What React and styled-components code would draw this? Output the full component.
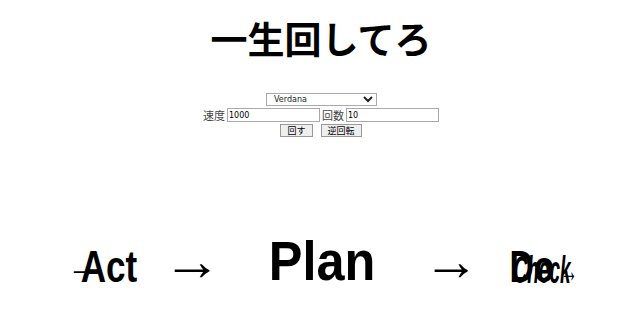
import React, { useState } from 'react';
import styled, { createGlobalStyle } from 'styled-components';

const GlobalStyle = createGlobalStyle`
  body {
    margin: 8px;
    background: #ffffff;
    font-family: "Liberation Sans", "Noto Sans CJK JP", sans-serif;
    color: #000000;
    overflow: hidden;
  }
`

const Page = styled.div`
  display: flex;
  flex-direction: column;
  align-items: center;
  padding-left: 12px;
`

const Title = styled.h1`
  margin: 6px 0 0 0;
  font-family: "Noto Sans CJK JP", sans-serif;
  font-size: 37px;
  font-weight: bold;
  line-height: 48px;
`

const Controls = styled.div`
  margin-top: 31px;
  display: flex;
  flex-direction: column;
  align-items: center;
  gap: 1px;
  font-family: "Noto Sans CJK JP", sans-serif;
  font-size: 10px;
  color: #333333;
`

const Row = styled.div`
  display: flex;
  align-items: center;
  gap: 2px;
`

const FontSelect = styled.select`
  width: 111px;
  height: 13px;
  margin-left: 1px;
  padding: 0 3px;
  font-family: "DejaVu Sans", sans-serif;
  font-size: 8px;
  border: 1px solid #a9a9a9;
  background: #ffffff;
  color: #222222;
`

const Field = styled.input`
  width: 93px;
  height: 14px;
  box-sizing: border-box;
  padding: 0 1px;
  font-family: "DejaVu Sans", sans-serif;
  font-size: 8px;
  border: 1px solid #a9a9a9;
  color: #000000;
`

const Label = styled.span`
  font-size: 11px;
  color: #444444;
`

const Button = styled.button`
  height: 13px;
  padding: 0 6px;
  margin: 0 3px;
  font-family: "Noto Sans CJK JP", sans-serif;
  font-size: 9px;
  line-height: 11px;
  border: 1px solid #999999;
  background: #efefef;
  color: #000000;
`

const Stage = styled.div`
  position: relative;
  align-self: stretch;
  margin-left: -12px;
  height: 70px;
  margin-top: 94px;
`

const Item = styled.span`
  position: absolute;
  bottom: ${p => p.$lift}px;
  white-space: nowrap;
  font-family: ${p => p.$arrow ? '"Liberation Serif", serif' : '"Liberation Sans", sans-serif'};
  font-weight: ${p => p.$arrow ? 'normal' : 'bold'};
  font-style: ${p => p.$italic ? 'italic' : 'normal'};
  font-size: ${p => p.$size}px;
  line-height: 1;
  transform: translateX(-50%) scaleX(${p => p.$sx});
`

// carousel items: x center on page, font size, horizontal squash, lift from base
const ring = [
  { text: '→', x: 81, size: 40, sx: 0.7, lift: 15, arrow: true },
  { text: 'Act', x: 108, size: 45, sx: 0.78, lift: 12 },
  { text: '→', x: 191, size: 56, sx: 1.05, lift: 12, arrow: true },
  { text: 'Plan', x: 321, size: 56, sx: 0.9, lift: 12 },
  { text: '→', x: 450, size: 56, sx: 1.0, lift: 12, arrow: true },
  { text: 'Do', x: 531, size: 45, sx: 0.75, lift: 12 },
  { text: 'Check', x: 541, size: 38, sx: 0.5, lift: 12, italic: true },
  { text: '→', x: 568, size: 34, sx: 0.5, lift: 13, arrow: true },
]

export default function App() {
  const [font, setFont] = useState('Verdana');
  const [speed, setSpeed] = useState('1000');
  const [count, setCount] = useState('10');

  return (
    <Page>
      <GlobalStyle />
      <Title>一生回してろ</Title>
      <Controls>
        <FontSelect value={font} onChange={e => setFont(e.target.value)}>
          <option>Verdana</option>
          <option>Arial</option>
          <option>Times New Roman</option>
        </FontSelect>
        <Row>
          <Label>速度</Label>
          <Field value={speed} onChange={e => setSpeed(e.target.value)} />
          <Label>回数</Label>
          <Field value={count} onChange={e => setCount(e.target.value)} />
        </Row>
        <Row>
          <Button>回す</Button>
          <Button>逆回転</Button>
        </Row>
      </Controls>
      <Stage>
        {ring.map((it, i) => (
          <Item
            key={i}
            $arrow={it.arrow}
            $italic={it.italic}
            $size={it.size}
            $sx={it.sx}
            $lift={it.lift}
            style={{ left: it.x - 7 }}
          >
            {it.text}
          </Item>
        ))}
      </Stage>
    </Page>
  );
}
